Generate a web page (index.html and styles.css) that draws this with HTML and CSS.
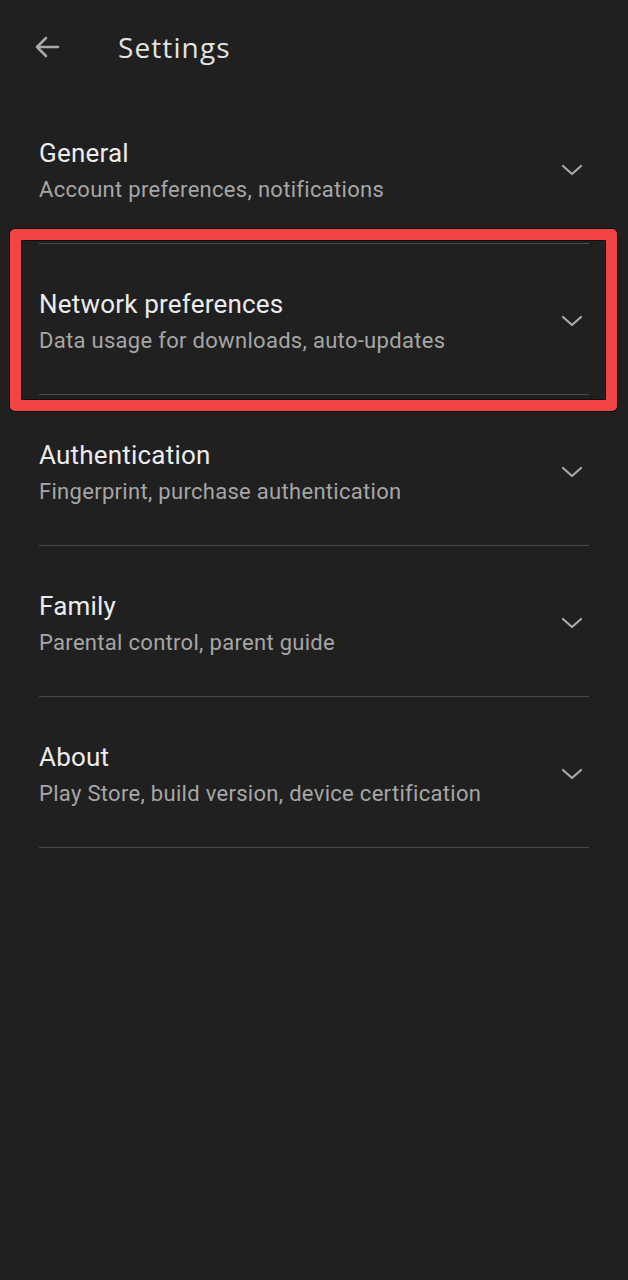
FILE: index.html
```html
<!DOCTYPE html>
<html>
<head>
<meta charset="utf-8">
<link rel="stylesheet" href="styles.css">
</head>
<body>
<div class="app">
  <header class="topbar">
    <svg class="back" width="28" height="24" viewBox="0 0 28 24">
      <path d="M25 12H4M13 3L4 12l9 9" fill="none" stroke="#a9a9a9" stroke-width="2.6" stroke-linecap="round" stroke-linejoin="round"/>
    </svg>
    <h1 class="title">Settings</h1>
  </header>
  <div class="list">
    <div class="row">
      <div class="text">
        <div class="row-title">General</div>
        <div class="row-sub">Account preferences, notifications</div>
      </div>
      <svg class="chev" width="22" height="12" viewBox="0 0 22 12"><path d="M2 2l9 8 9-8" fill="none" stroke="#a9a9a9" stroke-width="2.2" stroke-linecap="round" stroke-linejoin="round"/></svg>
    </div>
    <div class="row">
      <div class="text">
        <div class="row-title">Network preferences</div>
        <div class="row-sub">Data usage for downloads, auto-updates</div>
      </div>
      <svg class="chev" width="22" height="12" viewBox="0 0 22 12"><path d="M2 2l9 8 9-8" fill="none" stroke="#a9a9a9" stroke-width="2.2" stroke-linecap="round" stroke-linejoin="round"/></svg>
    </div>
    <div class="row">
      <div class="text">
        <div class="row-title">Authentication</div>
        <div class="row-sub">Fingerprint, purchase authentication</div>
      </div>
      <svg class="chev" width="22" height="12" viewBox="0 0 22 12"><path d="M2 2l9 8 9-8" fill="none" stroke="#a9a9a9" stroke-width="2.2" stroke-linecap="round" stroke-linejoin="round"/></svg>
    </div>
    <div class="row">
      <div class="text">
        <div class="row-title">Family</div>
        <div class="row-sub">Parental control, parent guide</div>
      </div>
      <svg class="chev" width="22" height="12" viewBox="0 0 22 12"><path d="M2 2l9 8 9-8" fill="none" stroke="#a9a9a9" stroke-width="2.2" stroke-linecap="round" stroke-linejoin="round"/></svg>
    </div>
    <div class="row">
      <div class="text">
        <div class="row-title">About</div>
        <div class="row-sub">Play Store, build version, device certification</div>
      </div>
      <svg class="chev" width="22" height="12" viewBox="0 0 22 12"><path d="M2 2l9 8 9-8" fill="none" stroke="#a9a9a9" stroke-width="2.2" stroke-linecap="round" stroke-linejoin="round"/></svg>
    </div>
    <div class="highlight"></div>
  </div>
</div>
</body>
</html>
```
FILE: styles.css
```css
html, body {
  margin: 0;
  padding: 0;
  background: #202020;
}
.app {
  width: 628px;
  height: 1280px;
  background: #202020;
  font-family: Roboto, "Liberation Sans", sans-serif;
}
.topbar {
  height: 93px;
  display: flex;
  align-items: center;
  padding: 0 0 0 33px;
  box-sizing: border-box;
}
.back {
  display: block;
}
.title {
  margin: 0 0 0 57px;
  font-family: "Open Sans", Roboto, sans-serif;
  font-weight: 500;
  font-size: 28px;
  color: #e3e3e3;
  letter-spacing: 1.1px;
}
.list {
  position: relative;
}
.row {
  height: 151px;
  box-sizing: border-box;
  margin: 0 39px;
  border-bottom: 1px solid #4a4a4a;
  display: flex;
  align-items: center;
  justify-content: space-between;
  padding-top: 4px;
}
.row-title {
  font-size: 26px;
  color: #ececec;
  line-height: 32px;
  letter-spacing: 0.2px;
}
.row-sub {
  font-size: 22px;
  color: #a6a6a6;
  line-height: 28px;
  margin-top: 7px;
  letter-spacing: 0.3px;
}
.chev {
  display: block;
  margin-right: 6px;
}
.highlight {
  position: absolute;
  left: 10px;
  top: 136px;
  width: 607px;
  height: 182px;
  box-sizing: border-box;
  border: 11px solid #f24444;
  border-radius: 5px;
  box-shadow: 0 0 0 1px rgba(0,0,0,0.5), inset 0 0 0 1px rgba(0,0,0,0.5);
}
```
